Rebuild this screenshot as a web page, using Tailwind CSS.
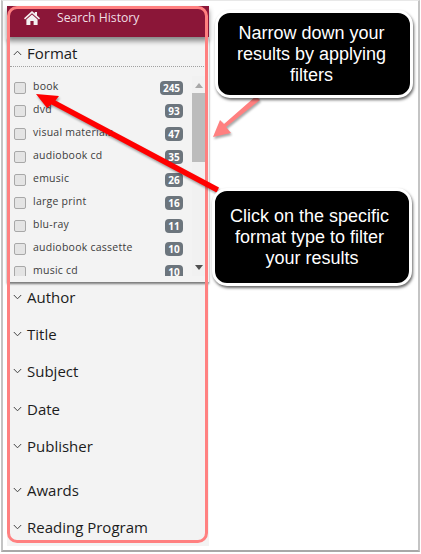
<!DOCTYPE html>
<html lang="en">
<head>
    <meta name="viewport" content="width=device-width, initial-scale=1.0">
    <title>Search Filters</title>
    <script src="https://cdn.jsdelivr.net/npm/@tailwindcss/browser@4"></script>
</head>
<body class="bg-white overflow-hidden">
<div class="relative w-[421px] h-[554px] overflow-hidden bg-white">
    <div class="ml-[1px] w-[419px] h-[552px] border-x-2 border-b-2 border-t border-t-[#e8e8e8] border-x-[#c4c4c4] border-b-[#a8a8a8] pt-[5px] pl-[4px]">
        <!-- sidebar -->
        <div class="relative w-[202px] h-[540px] bg-[#f3f3f3] font-['Open_Sans','Noto_Sans',sans-serif]">
            <div class="h-[31px] bg-[#8b1638] flex items-start pt-[3px] shadow-[0_4px_5px_rgba(0,0,0,0.45)]">
                <svg class="ml-[17px] mt-[2px] w-[16px] h-[14px]" viewBox="0 0 16 14"><path d="M8 0 L10.8 2.5 V1 H13 V4.5 L16 7.2 L15 8.4 L8 2.2 L1 8.4 L0 7.2 Z M8 3.6 L13.6 8.6 V14 H9.6 V10 H6.4 V14 H2.4 V8.6 Z" fill="#f4f0f1"/></svg>
                <span class="ml-[17px] text-[12.2px] leading-[17px] text-[#f0dfe4]">Search History</span>
            </div>

            <div class="relative h-[245px] shadow-[0_2px_2px_rgba(0,0,0,0.5)]">
                <div class="flex items-center h-[30px] pt-[3px] mx-[3px] pl-[3px] border-b border-dotted border-b-[#a0a0a0]">
                    <svg class="w-[9px] h-[6px]" viewBox="0 0 9 6"><path d="M0.8 5 L4.5 1.2 L8.2 5" fill="none" stroke="#444" stroke-width="1"/></svg>
                    <span class="ml-[5px] text-[15px] leading-[20px] font-medium text-[#1c1c1c]">Format</span>
                </div>
                <div class="flex h-[206px] mt-[9px] pl-[7px]">
                    <ul class="w-[170px] h-[200px] overflow-hidden text-[10.5px] tracking-[0.25px] text-[#3c3c3c]">
                        <li class="flex items-center h-[23px]"><span class="w-[12px] h-[12px] bg-[#e4e4e4] border border-[#a8a8a8] rounded-[2px]"></span><span class="ml-[7px] mb-[2px]">book</span><span class="ml-auto mr-[1px] w-[23px] h-[14px] rounded-[4px] bg-[#6c757d] text-white text-[10px] font-bold leading-[14px] text-center tracking-normal">245</span></li>
                        <li class="flex items-center h-[23px]"><span class="w-[12px] h-[12px] bg-[#e4e4e4] border border-[#a8a8a8] rounded-[2px]"></span><span class="ml-[7px] mb-[2px]">dvd</span><span class="ml-auto mr-[1px] w-[18px] h-[14px] rounded-[4px] bg-[#6c757d] text-white text-[10px] font-bold leading-[14px] text-center tracking-normal">93</span></li>
                        <li class="flex items-center h-[23px]"><span class="w-[12px] h-[12px] bg-[#e4e4e4] border border-[#a8a8a8] rounded-[2px]"></span><span class="ml-[7px] mb-[2px]">visual materials</span><span class="ml-auto mr-[1px] w-[18px] h-[14px] rounded-[4px] bg-[#6c757d] text-white text-[10px] font-bold leading-[14px] text-center tracking-normal">47</span></li>
                        <li class="flex items-center h-[23px]"><span class="w-[12px] h-[12px] bg-[#e4e4e4] border border-[#a8a8a8] rounded-[2px]"></span><span class="ml-[7px] mb-[2px]">audiobook cd</span><span class="ml-auto mr-[1px] w-[18px] h-[14px] rounded-[4px] bg-[#6c757d] text-white text-[10px] font-bold leading-[14px] text-center tracking-normal">35</span></li>
                        <li class="flex items-center h-[23px]"><span class="w-[12px] h-[12px] bg-[#e4e4e4] border border-[#a8a8a8] rounded-[2px]"></span><span class="ml-[7px] mb-[2px]">emusic</span><span class="ml-auto mr-[1px] w-[18px] h-[14px] rounded-[4px] bg-[#6c757d] text-white text-[10px] font-bold leading-[14px] text-center tracking-normal">26</span></li>
                        <li class="flex items-center h-[23px]"><span class="w-[12px] h-[12px] bg-[#e4e4e4] border border-[#a8a8a8] rounded-[2px]"></span><span class="ml-[7px] mb-[2px]">large print</span><span class="ml-auto mr-[1px] w-[18px] h-[14px] rounded-[4px] bg-[#6c757d] text-white text-[10px] font-bold leading-[14px] text-center tracking-normal">16</span></li>
                        <li class="flex items-center h-[23px]"><span class="w-[12px] h-[12px] bg-[#e4e4e4] border border-[#a8a8a8] rounded-[2px]"></span><span class="ml-[7px] mb-[2px]">blu-ray</span><span class="ml-auto mr-[1px] w-[18px] h-[14px] rounded-[4px] bg-[#6c757d] text-white text-[10px] font-bold leading-[14px] text-center tracking-normal">11</span></li>
                        <li class="flex items-center h-[23px]"><span class="w-[12px] h-[12px] bg-[#e4e4e4] border border-[#a8a8a8] rounded-[2px]"></span><span class="ml-[7px] mb-[2px]">audiobook cassette</span><span class="ml-auto mr-[1px] w-[18px] h-[14px] rounded-[4px] bg-[#6c757d] text-white text-[10px] font-bold leading-[14px] text-center tracking-normal">10</span></li>
                        <li class="flex items-center h-[23px]"><span class="w-[12px] h-[12px] bg-[#e4e4e4] border border-[#a8a8a8] rounded-[2px]"></span><span class="ml-[7px] mb-[2px]">music cd</span><span class="ml-auto mr-[1px] w-[18px] h-[14px] rounded-[4px] bg-[#6c757d] text-white text-[10px] font-bold leading-[14px] text-center tracking-normal">10</span></li>
                    </ul>
                    <!-- scrollbar -->
                    <div class="ml-[8px] w-[14px] h-[200px] bg-[#f1f1f1] flex flex-col items-center">
                        <svg class="mt-[7px] w-[8px] h-[5px]" viewBox="0 0 8 5"><path d="M4 0 L8 5 H0 Z" fill="#a8a8a8"/></svg>
                        <div class="mt-[5px] w-[14px] h-[69px] bg-[#bcbcbc]"></div>
                        <svg class="mt-auto mb-[6px] w-[8px] h-[5px]" viewBox="0 0 8 5"><path d="M0 0 H8 L4 5 Z" fill="#505050"/></svg>
                    </div>
                </div>
            </div>

            <!-- collapsed filters -->
            <div class="flex flex-col pl-[6px] text-[15px] font-medium text-[#1c1c1c]">
                <div class="flex items-center h-[20px] mt-[5px]"><svg class="w-[9px] h-[6px]" viewBox="0 0 9 6"><path d="M0.8 1 L4.5 4.8 L8.2 1" fill="none" stroke="#444" stroke-width="1"/></svg><span class="ml-[5px]">Author</span></div>
                <div class="flex items-center h-[20px] mt-[17px]"><svg class="w-[9px] h-[6px]" viewBox="0 0 9 6"><path d="M0.8 1 L4.5 4.8 L8.2 1" fill="none" stroke="#444" stroke-width="1"/></svg><span class="ml-[5px]">Title</span></div>
                <div class="flex items-center h-[20px] mt-[17px]"><svg class="w-[9px] h-[6px]" viewBox="0 0 9 6"><path d="M0.8 1 L4.5 4.8 L8.2 1" fill="none" stroke="#444" stroke-width="1"/></svg><span class="ml-[5px]">Subject</span></div>
                <div class="flex items-center h-[20px] mt-[18px]"><svg class="w-[9px] h-[6px]" viewBox="0 0 9 6"><path d="M0.8 1 L4.5 4.8 L8.2 1" fill="none" stroke="#444" stroke-width="1"/></svg><span class="ml-[5px]">Date</span></div>
                <div class="flex items-center h-[20px] mt-[17px]"><svg class="w-[9px] h-[6px]" viewBox="0 0 9 6"><path d="M0.8 1 L4.5 4.8 L8.2 1" fill="none" stroke="#444" stroke-width="1"/></svg><span class="ml-[5px]">Publisher</span></div>
                <div class="flex items-center h-[20px] mt-[24px]"><svg class="w-[9px] h-[6px]" viewBox="0 0 9 6"><path d="M0.8 1 L4.5 4.8 L8.2 1" fill="none" stroke="#444" stroke-width="1"/></svg><span class="ml-[5px]">Awards</span></div>
                <div class="flex items-center h-[20px] mt-[17px]"><svg class="w-[9px] h-[6px]" viewBox="0 0 9 6"><path d="M0.8 1 L4.5 4.8 L8.2 1" fill="none" stroke="#444" stroke-width="1"/></svg><span class="ml-[5px]">Reading Program</span></div>
            </div>
        </div>
    </div>

    <!-- annotation layer -->
    <div class="absolute left-[7px] top-[6px] w-[201px] h-[537px] border-[3px] border-[#ff8080] rounded-[10px]"></div>

    <svg class="absolute left-0 top-0 w-[421px] h-[554px] drop-shadow-[1px_2px_1px_rgba(0,0,0,0.35)]" viewBox="0 0 421 554">
        <path d="M256 96 L260 100 L226 127 L231 133 L213 137 L220 120 L224 124 Z" fill="#ff8080"/>
        <path d="M36 94 L59 96 L55.5 100.5 L219 187.5 L216.5 192.5 L51.5 104.5 L47 108 Z" fill="#ff0000"/>
    </svg>

    <div class="absolute left-[215px] top-[10px] w-[198px] h-[88px] pr-[5px] bg-black border-[3px] border-white rounded-[15px] shadow-[1px_2px_3px_rgba(0,0,0,0.6)] flex items-center justify-center text-center text-white text-[18px] leading-[21px] font-['Liberation_Sans',Arial,sans-serif]">
        <p>Narrow down your<br>results by applying<br>filters</p>
    </div>
    <div class="absolute left-[212px] top-[188px] w-[200px] h-[98px] pr-[5px] bg-black border-[3px] border-white rounded-[15px] shadow-[1px_2px_3px_rgba(0,0,0,0.6)] flex items-center justify-center text-center text-white text-[18px] leading-[21px] font-['Liberation_Sans',Arial,sans-serif]">
        <p>Click on the specific<br>format type to filter<br>&nbsp;your results</p>
    </div>
</div>
</body>
</html>
